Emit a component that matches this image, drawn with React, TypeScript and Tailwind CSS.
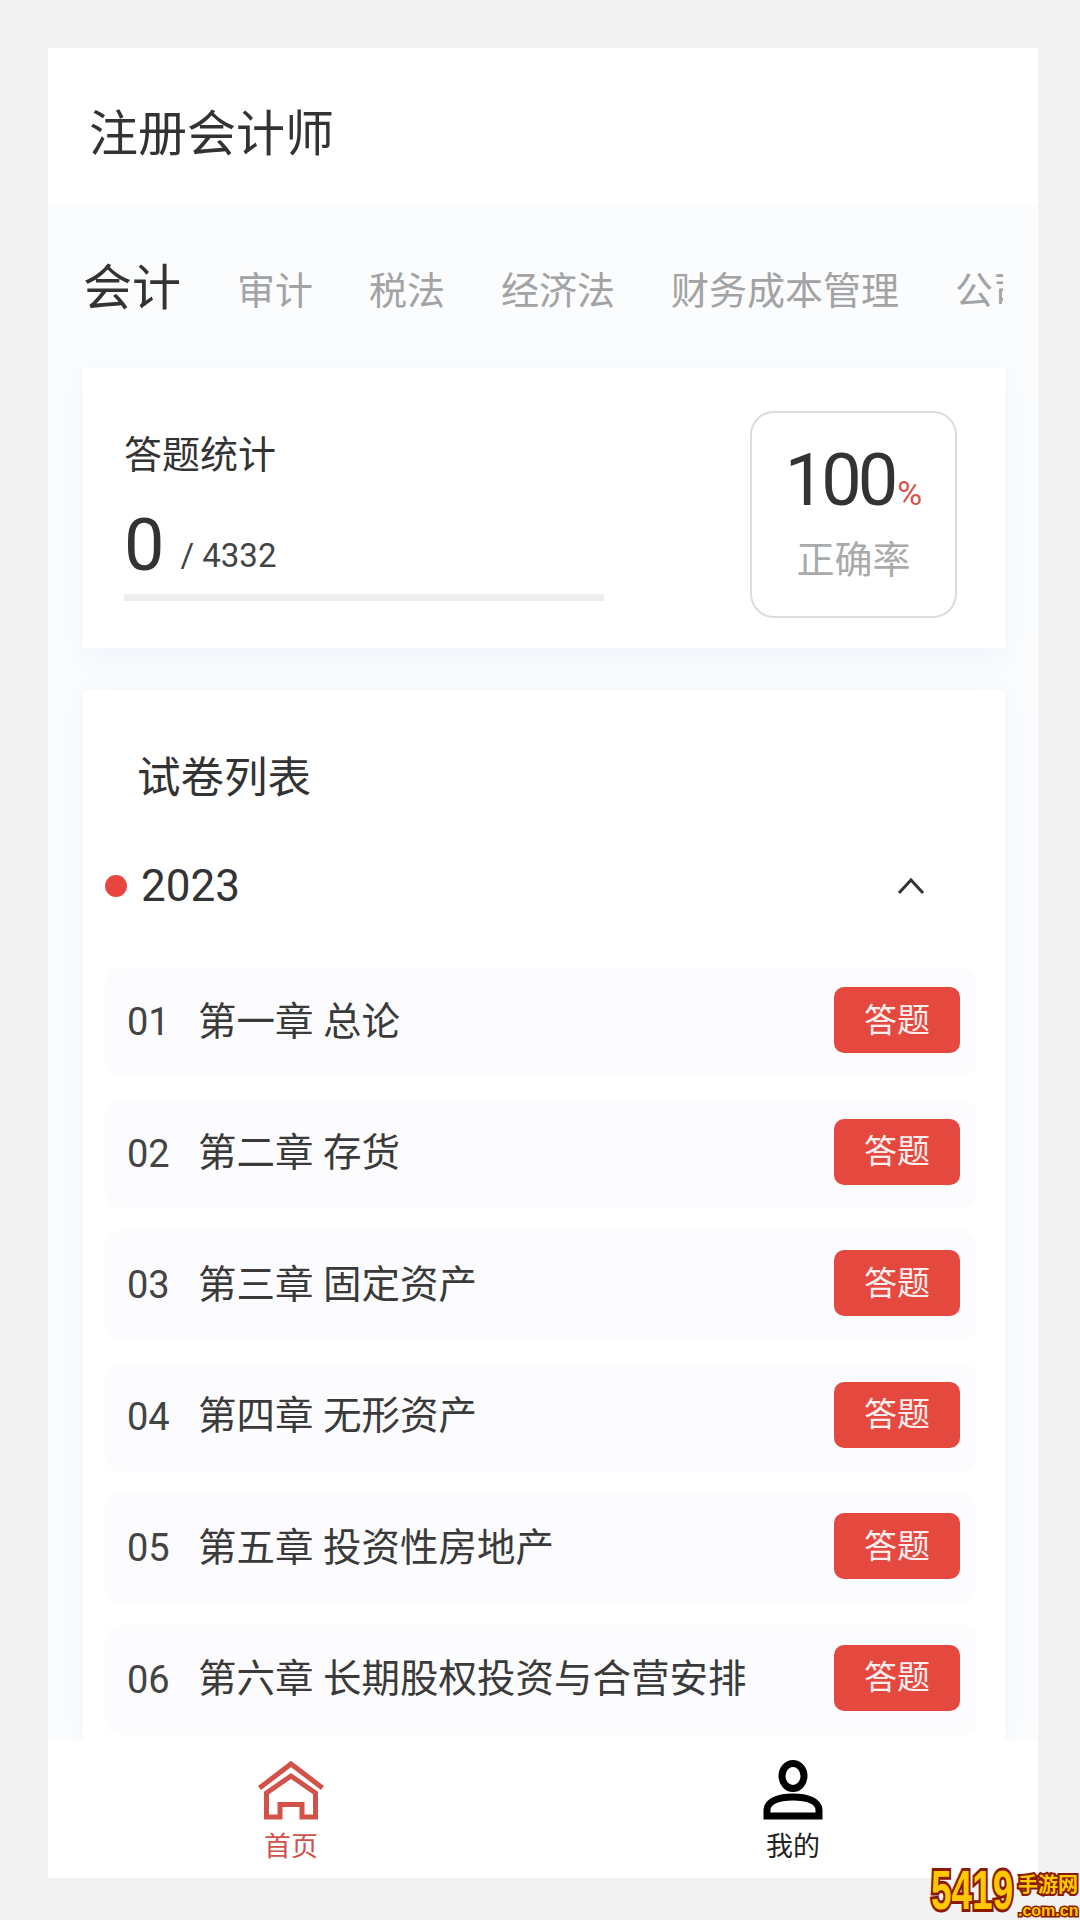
import React from "react";

const rows = [
  ["01", "第一章 总论"],
  ["02", "第二章 存货"],
  ["03", "第三章 固定资产"],
  ["04", "第四章 无形资产"],
  ["05", "第五章 投资性房地产"],
  ["06", "第六章 长期股权投资与合营安排"],
];

const font = { fontFamily: 'Roboto, "Noto Sans CJK SC", sans-serif' };

function HomeIcon() {
  return (
    <svg width="66" height="60" viewBox="0 0 66 60" fill="none" stroke="#d2524a" strokeWidth="5">
      <path d="M1.5 28 L33 4 L64.5 28" strokeLinejoin="miter" />
      <path d="M8.5 57 V33 L33 16 L57.5 33 V57 H44 V44.5 H22 V57 Z" strokeLinejoin="miter" />
    </svg>
  );
}

function UserIcon() {
  return (
    <svg width="60" height="60" viewBox="0 0 60 60" fill="none" stroke="#000" strokeWidth="7">
      <ellipse cx="30" cy="16" rx="11" ry="12.5" />
      <path d="M4 56 V50 C4 41 16 37 30 37 C44 37 56 41 56 50 V56 Z" />
    </svg>
  );
}

export default function App() {
  return (
    <div className="relative w-[1080px] h-[1920px] bg-[#f2f2f2] pt-[48px] pl-[48px] overflow-hidden" style={font}>
      <div className="w-[990px] h-[1830px] bg-[#fafcfe] flex flex-col overflow-hidden">
        <div className="h-[157px] shrink-0 bg-white pl-[41px] pt-[16px] flex items-center">
          <span className="text-[49px] leading-none text-[#333]">注册会计师</span>
        </div>

        <div className="flex-1 min-h-0 overflow-hidden flex flex-col px-[35px]">
          <div className="h-[163px] shrink-0 w-[920px] pt-[4px] overflow-hidden flex items-center whitespace-nowrap gap-[56px]">
            <span className="text-[49px] leading-none text-[#333]">会计</span>
            <span className="text-[38px] leading-none text-[#a3a3a3] mt-[4px]">审计</span>
            <span className="text-[38px] leading-none text-[#a3a3a3] mt-[4px]">税法</span>
            <span className="text-[38px] leading-none text-[#a3a3a3] mt-[4px]">经济法</span>
            <span className="text-[38px] leading-none text-[#a3a3a3] mt-[4px]">财务成本管理</span>
            <span className="text-[38px] leading-none text-[#a3a3a3] mt-[4px]">公司战略</span>
          </div>

          <div className="h-[280px] w-[922px] shrink-0 bg-white shadow-[0_8px_24px_rgba(220,230,245,0.3)] flex justify-between pl-[41px] pr-[48px]">
            <div className="w-[480px] flex flex-col pt-[68px]">
              <span className="text-[38px] leading-none text-[#333]">答题统计</span>
              <div className="flex items-baseline mt-[30px] h-[84px]">
                <span className="text-[72px] leading-[84px] text-[#333]">0</span>
                <span className="text-[33px] text-[#444] ml-[16px] -translate-y-[3px]">/ 4332</span>
              </div>
              <div className="h-[7px] bg-[#eeeeee] mt-[6px]" />
            </div>
            <div className="w-[207px] h-[207px] mt-[43px] rounded-[24px] border-2 border-[#dcdcdc] flex flex-col items-center pt-[26px]">
              <div className="flex items-baseline h-[84px]">
                <span className="text-[72px] leading-[84px] tracking-[-4px] text-[#333]">100</span>
                <span className="text-[34px] text-[#d9534f] ml-[3px]">%</span>
              </div>
              <span className="text-[38px] leading-none text-[#aaaaaa] mt-[18px]">正确率</span>
            </div>
          </div>

          <div className="mt-[42px] w-[922px] flex-1 bg-white shadow-[0_0_24px_rgba(220,230,245,0.25)] flex flex-col pt-[62px]">
            <div className="pl-[54px] text-[43.5px] leading-[54px] text-[#333]">试卷列表</div>
            <div className="flex items-center justify-between h-[54px] mt-[53px] pl-[22px] pr-[80px]">
              <div className="flex items-center gap-[14px]">
                <span className="w-[22px] h-[22px] rounded-full bg-[#e8453f]" />
                <span className="text-[44px] leading-none text-[#333]">2023</span>
              </div>
              <svg width="28" height="18" viewBox="0 0 28 18" fill="none" stroke="#333" strokeWidth="3">
                <path d="M2 16 L14 3 L26 16" />
              </svg>
            </div>
            <div className="flex flex-col gap-[21.5px] mt-[54px] pl-[22px] pr-[28px]">
              {rows.map(([n, t]) => (
                <div key={n} className="h-[110px] shrink-0 rounded-[16px] bg-[#fcfcfe] flex items-center justify-between pl-[22px] pr-[17px]">
                  <div className="flex items-center">
                    <span className="w-[71px] text-[38px] leading-none text-[#444]">{n}</span>
                    <span className="text-[38.5px] leading-none text-[#3a3a3a]">{t}</span>
                  </div>
                  <button className="w-[126px] h-[66px] rounded-[10px] bg-[#e5483f] text-[#fdeeee] text-[33px] leading-none flex items-center justify-center mb-[4px]">
                    答题
                  </button>
                </div>
              ))}
            </div>
          </div>
        </div>

        <div className="h-[138px] shrink-0 bg-white flex">
          <div className="w-[486px] flex flex-col items-center pt-[20px]">
            <HomeIcon />
            <span className="text-[27px] leading-none text-[#d2524a] mt-[14px]">首页</span>
          </div>
          <div className="w-[504px] pl-[14px] flex flex-col items-center pt-[20px]">
            <UserIcon />
            <span className="text-[27px] leading-none text-[#222] mt-[14px]">我的</span>
          </div>
        </div>
      </div>

      <div className="absolute left-[931px] top-[1864px] w-[149px] h-[56px] [font-family:'Liberation_Sans',sans-serif]">
        <span className="absolute left-0 top-[-2px] origin-left scale-x-[0.66] text-[56px] leading-[56px] font-black text-[#ffc800] [-webkit-text-stroke:6px_#8a1a00] [paint-order:stroke_fill]">5419</span>
        <span className="absolute left-[87px] top-[9px] text-[20px] leading-[24px] font-bold whitespace-nowrap text-[#ffc800] [-webkit-text-stroke:4px_#8a1a00] [paint-order:stroke_fill]" style={font}>手游网</span>
        <span className="absolute left-[87px] top-[38px] text-[16px] leading-[18px] font-bold whitespace-nowrap text-[#ffc800] [-webkit-text-stroke:3px_#8a1a00] [paint-order:stroke_fill]">.com.cn</span>
      </div>
    </div>
  );
}
